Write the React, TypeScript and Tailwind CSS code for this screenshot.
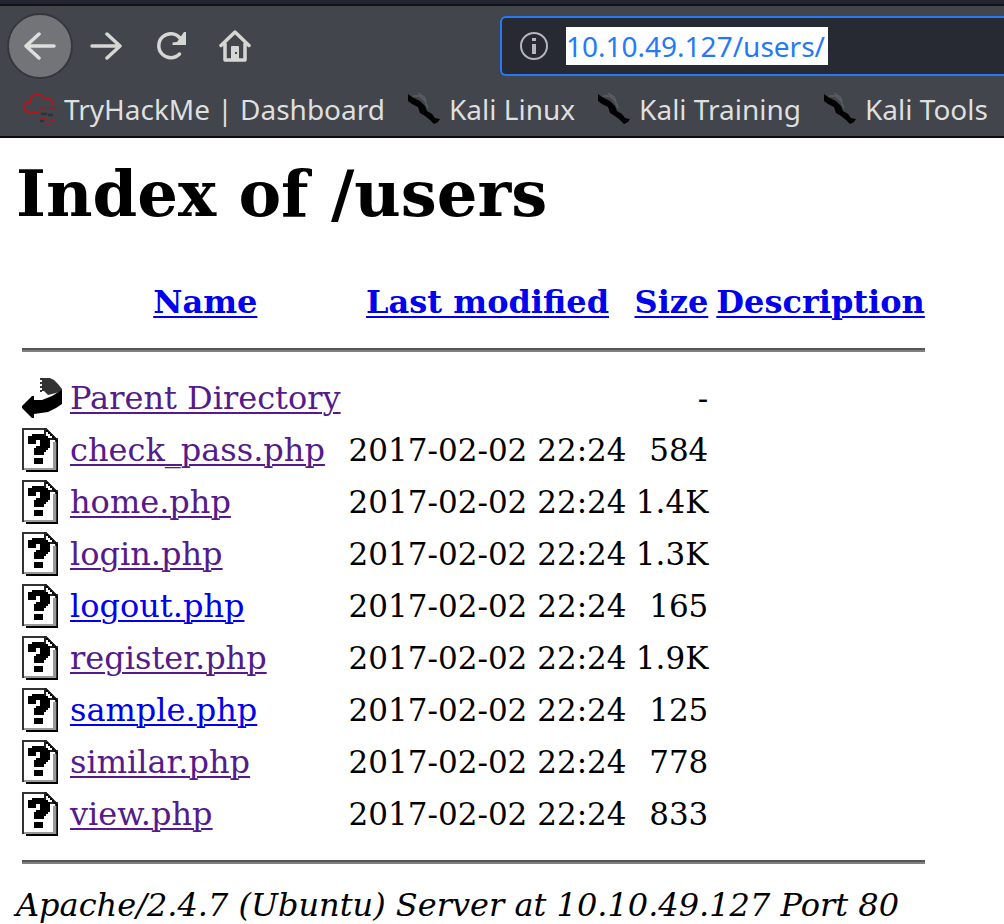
type Entry = { name: string; modified?: string; size: string; visited: boolean };

const entries: Entry[] = [
  { name: "check_pass.php", modified: "2017-02-02 22:24", size: "584", visited: true },
  { name: "home.php", modified: "2017-02-02 22:24", size: "1.4K", visited: true },
  { name: "login.php", modified: "2017-02-02 22:24", size: "1.3K", visited: true },
  { name: "logout.php", modified: "2017-02-02 22:24", size: "165", visited: false },
  { name: "register.php", modified: "2017-02-02 22:24", size: "1.9K", visited: true },
  { name: "sample.php", modified: "2017-02-02 22:24", size: "125", visited: false },
  { name: "similar.php", modified: "2017-02-02 22:24", size: "778", visited: true },
  { name: "view.php", modified: "2017-02-02 22:24", size: "833", visited: true },
];

function CloudIcon() {
  return (
    <svg viewBox="0 0 32 32" className="size-8 shrink-0" fill="none" aria-hidden="true">
      <path d="M17 19H7C-1 19-1 9 7 9C7 0 19-1 21 6C26 4 30 8 30 13" stroke="#b5161b" strokeWidth="2" />
      <path d="M17 15.500H23M26 15.500H32M16 25H24M27 27H32M22 31H26" stroke="#8f2229" strokeWidth="2" />
      <path d="M18 21H24M25 22H30M17 28H21" stroke="#303238" strokeWidth="2.500" />
    </svg>
  );
}

function KaliIcon() {
  return (
    <svg viewBox="0 0 32 32" className="size-8 shrink-0" aria-hidden="true">
      <path d="M5 3H12L17 8L20 15M10 0L16 4L18 8" fill="none" stroke="#5c5e64" strokeWidth="1.500" />
      <path d="M0 1L4 4L12 8L17 13L19 18L24 21L27 25L32 26L30 29L26 31L22 27L17 23L12 20L10 14L4 11L0 8Z" fill="#000" />
    </svg>
  );
}

function BackIcon() {
  return (
    <svg viewBox="0 0 40 44" className="h-11 w-10" role="img" aria-label="[PARENTDIR]">
      <path d="M20 2H28L32 4L36 8L40 13V15L34 17L26 19L22 15H20Z" fill="#333" />
      <path d="M19 2V16" stroke="#333" strokeWidth="2" strokeDasharray="2 2" />
      <path d="M40 14V28L34 32L26 36L12 38V42H10L0 32V30L10 20H12V24H20L30 20L38 15Z" fill="#000" />
    </svg>
  );
}

function UnknownIcon() {
  return (
    <svg viewBox="0 0 40 44" className="h-11 w-10" shapeRendering="crispEdges" role="img" aria-label="[   ]">
      <path d="M4 42H34V12H36V44H4Z" fill="#000" />
      <path d="M1 1H24L34 11V41H1Z" fill="#fff" stroke="#333" strokeWidth="2" />
      <path d="M31 14H34V42H2V40H31Z" fill="#999" />
      <path d="M22 0H24V10H36V12H22Z" fill="#222" />
      <path d="M24 2H26V4H28V6H30V8H32V10H34V12H36V14H34V12H32V10H30V8H28V6H26V4H24Z" fill="#000" />
      <path d="M10 6H22V8H26V10H28V20H26V22H24V24H22V27H12V20H14V18H18V12H14V16H6V8H10Z" fill="#000" />
      <path d="M12 30H21V36H12Z" fill="#000" />
    </svg>
  );
}

const bookmarks = [
  { label: "TryHackMe | Dashboard", Icon: CloudIcon },
  { label: "Kali Linux", Icon: KaliIcon },
  { label: "Kali Training", Icon: KaliIcon },
  { label: "Kali Tools", Icon: KaliIcon },
];

function BrowserChrome() {
  return (
    <header className="overflow-hidden border-b-2 border-[#0c0c0d] bg-[#42454b] font-['Noto_Sans',sans-serif]">
      <div className="h-[6px] border-b-2 border-[#111216] bg-[#22252f]" />
      <div className="flex items-center pt-[7px] pl-[7px]">
        <button aria-label="Back" className="flex size-[66px] shrink-0 items-center justify-center rounded-full border-2 border-[#35373c] bg-[#737477]">
          <svg viewBox="0 0 32 32" className="size-8" fill="none" stroke="#dededc" strokeWidth="3.500" strokeLinecap="round" strokeLinejoin="round">
            <path d="M30 16H3M15 4L2 16L15 28" />
          </svg>
        </button>
        <button aria-label="Forward" className="flex w-[66px] shrink-0 items-center justify-center">
          <svg viewBox="0 0 32 32" className="size-8" fill="none" stroke="#d6d6d3" strokeWidth="3.500" strokeLinecap="round" strokeLinejoin="round">
            <path d="M2 16H29M17 4L30 16L17 28" />
          </svg>
        </button>
        <button aria-label="Reload" className="flex size-16 shrink-0 items-center justify-center">
          <svg viewBox="0 0 32 32" className="size-8" fill="none" stroke="#d6d6d3" strokeWidth="3.500" strokeLinecap="round">
            <path d="M24.500 24A12 12 0 1 1 25 8" />
            <path d="M31 2V15H17.500V12.500L22 12L29 2Z" fill="#d6d6d3" stroke="none" />
          </svg>
        </button>
        <button aria-label="Home" className="flex size-16 shrink-0 items-center justify-center">
          <svg viewBox="0 0 32 32" className="size-8" fill="none" stroke="#d6d6d3" strokeWidth="3.500" strokeLinecap="round" strokeLinejoin="round">
            <path d="M2 15.500L16 2L30 15.500M6 14V30H26V14" />
            <path d="M12 30V17Q12 16 13 16H19Q20 16 20 17V30Z" fill="#d6d6d3" stroke="none" />
            <path d="M17 22V24" stroke="#42454b" strokeWidth="2" strokeLinecap="butt" />
          </svg>
        </button>
        <div className="ml-[233px] flex h-[60px] min-w-0 flex-1 items-center gap-[18px] rounded-l-md border-2 border-r-0 border-[#2479f5] bg-[#272933] pl-[18px]">
          <svg viewBox="0 0 28 28" className="size-7 shrink-0" fill="none" stroke="#b5b6b9" aria-hidden="true">
            <circle cx="14" cy="14" r="13" strokeWidth="2" />
            <path d="M14 6V9M14 12V22" strokeWidth="4" />
          </svg>
          <input
            aria-label="Address"
            defaultValue="10.10.49.127/users/"
            className="h-[38px] w-[262px] bg-white text-[28px] leading-[38px] text-[#2479f5] outline-none"
          />
        </div>
      </div>
      <nav aria-label="Bookmarks" className="flex gap-[23px] pt-[11px] pb-2 pl-[23px]">
        {bookmarks.map(({ label, Icon }) => (
          <a key={label} href="#" className="flex shrink-0 items-center gap-[9px] text-[28px] leading-[38px] whitespace-nowrap text-[#dedfdf]">
            <Icon />
            {label}
          </a>
        ))}
      </nav>
    </header>
  );
}

function Rule() {
  return (
    <tr>
      <td colSpan={5} className="p-[2px]">
        <hr className="my-4 h-1 border-t-2 border-b-2 border-t-[#555] border-b-[#808080]" />
      </td>
    </tr>
  );
}

const linkBase = "underline decoration-2 underline-offset-[3px]";

export default function App() {
  return (
    <div className="bg-white font-['DejaVu_Serif',serif] text-black">
      <BrowserChrome />
      <main className="px-4">
        <h1 className="mt-[19px] mb-[43px] text-[64px] leading-[74px] font-bold">Index of /users</h1>
        <table className="border-separate border-spacing-1 text-[32px] leading-[38px] whitespace-nowrap">
          <thead>
            <tr>
              <td className="p-[2px]">
                <div className="h-11 w-10" />
              </td>
              {["Name", "Last modified", "Size", "Description"].map((h) => (
                <th key={h} scope="col" className="p-[2px] text-center font-bold">
                  <a href="#" className={`${linkBase} text-[#0000ee]`}>{h}</a>
                </th>
              ))}
            </tr>
          </thead>
          <tbody>
            <Rule />
            <tr>
              <td className="p-[2px]"><BackIcon /></td>
              <td className="p-[2px]"><a href="#" className={`${linkBase} text-[#551a8b]`}>Parent Directory</a></td>
              <td className="p-[2px]" />
              <td className="p-[2px] text-right text-[31px]">-</td>
              <td className="p-[2px]" />
            </tr>
            {entries.map((e) => (
              <tr key={e.name}>
                <td className="p-[2px]"><UnknownIcon /></td>
                <td className="p-[2px]">
                  <a href="#" className={`${linkBase} ${e.visited ? "text-[#551a8b]" : "text-[#0000ee]"}`}>{e.name}</a>
                </td>
                <td className="p-[2px] text-right text-[31px]">{e.modified}</td>
                <td className="p-[2px] text-right text-[31px]">{e.size}</td>
                <td className="p-[2px]" />
              </tr>
            ))}
            <Rule />
          </tbody>
        </table>
        <address className="text-[32px] leading-[38px] italic">Apache/2.4.7 (Ubuntu) Server at 10.10.49.127 Port 80</address>
      </main>
    </div>
  );
}
